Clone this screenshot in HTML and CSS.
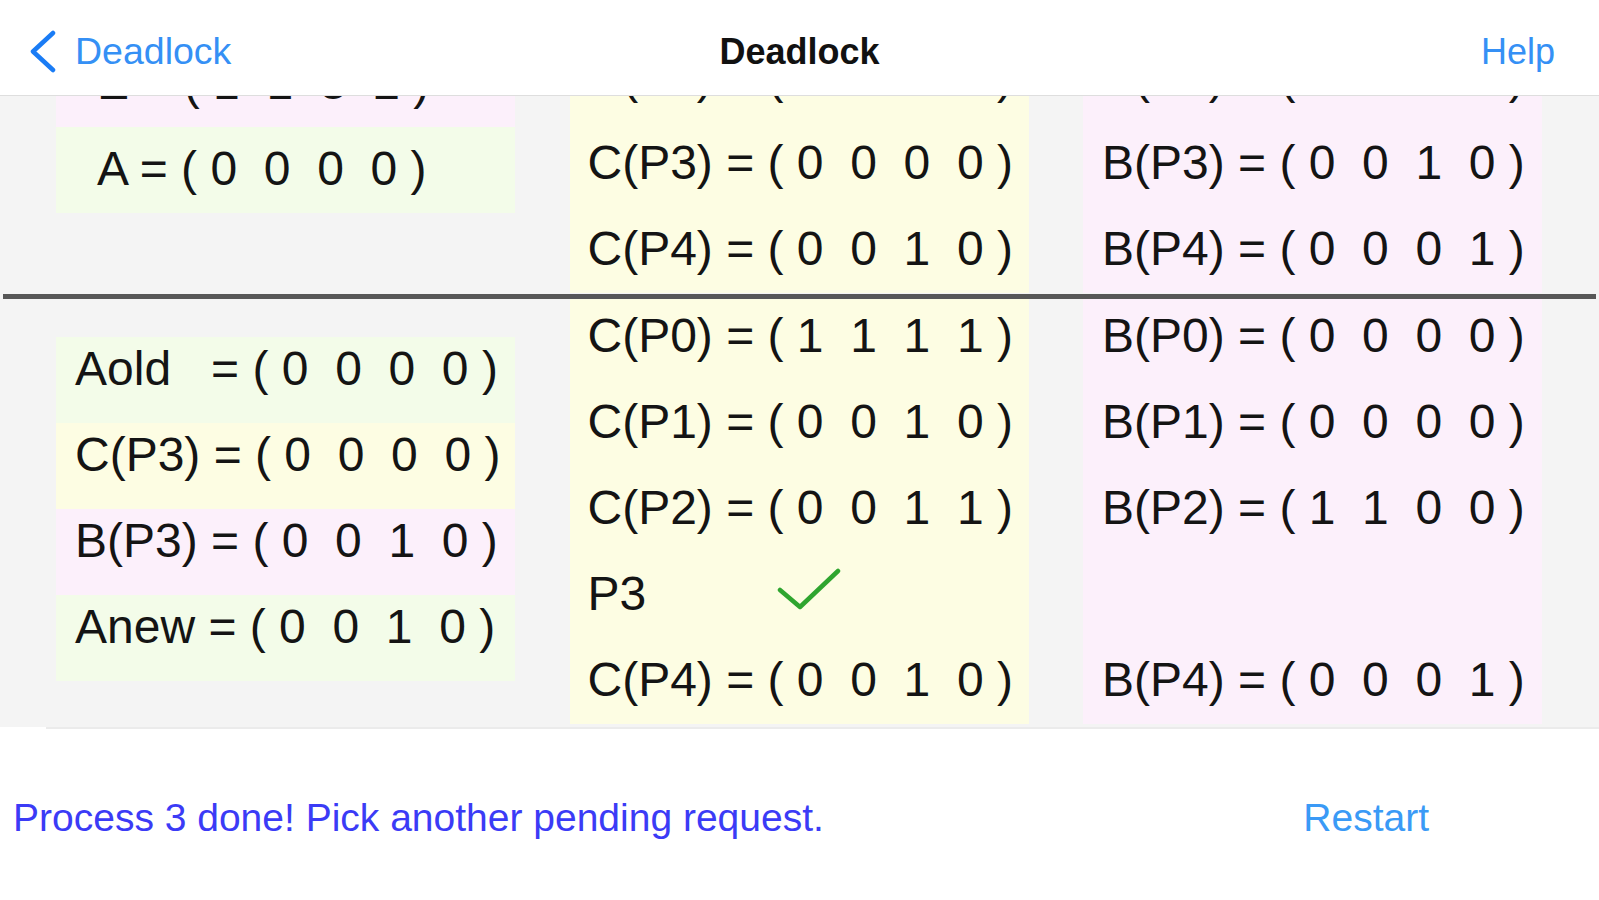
FILE: index.html
```html
<!DOCTYPE html>
<html lang="en">
<head>
<meta charset="utf-8">
<title>Deadlock</title>
<link rel="stylesheet" href="styles.css">
</head>
<body>
<header class="nav">
  <a class="back">
    <svg class="chev" width="30" height="44" viewBox="0 0 30 44"><path d="M25 3 L5 21.5 L25 40" fill="none" stroke="#1a7cf5" stroke-width="4.5" stroke-linecap="round" stroke-linejoin="round"/></svg>
    <span class="back-text">Deadlock</span>
  </a>
  <div class="title">Deadlock</div>
  <a class="help">Help</a>
</header>

<main class="scroll">
  <div class="content">
    <section class="grid top">
      <div class="col left-top">
        <div class="row p pad-l">E = ( 1  1  3  2 )</div>
        <div class="row g pad-l">A = ( 0  0  0  0 )</div>
      </div>
      <div class="col y">
        <div class="row">C(P2) = ( 0  0  1  1 )</div>
        <div class="row">C(P3) = ( 0  0  0  0 )</div>
        <div class="row">C(P4) = ( 0  0  1  0 )</div>
      </div>
      <div class="col p">
        <div class="row">B(P2) = ( 1  1  0  0 )</div>
        <div class="row">B(P3) = ( 0  0  1  0 )</div>
        <div class="row">B(P4) = ( 0  0  0  1 )</div>
      </div>
    </section>

    <div class="divider"></div>

    <section class="grid bottom">
      <div class="col left-bottom">
        <div class="row g lb">Aold   = ( 0  0  0  0 )</div>
        <div class="row y lb">C(P3) = ( 0  0  0  0 )</div>
        <div class="row p lb">B(P3) = ( 0  0  1  0 )</div>
        <div class="row g lb">Anew = ( 0  0  1  0 )</div>
      </div>
      <div class="col y">
        <div class="row">C(P0) = ( 1  1  1  1 )</div>
        <div class="row">C(P1) = ( 0  0  1  0 )</div>
        <div class="row">C(P2) = ( 0  0  1  1 )</div>
        <div class="row">P3<svg class="check" width="64" height="52" viewBox="0 0 64 52"><path d="M3 23 L23 40 L61 4" fill="none" stroke="#2fa52f" stroke-width="4.5" stroke-linecap="round" stroke-linejoin="round"/></svg></div>
        <div class="row">C(P4) = ( 0  0  1  0 )</div>
      </div>
      <div class="col p right">
        <div class="row">B(P0) = ( 0  0  0  0 )</div>
        <div class="row">B(P1) = ( 0  0  0  0 )</div>
        <div class="row">B(P2) = ( 1  1  0  0 )</div>
        <div class="row"></div>
        <div class="row">B(P4) = ( 0  0  0  1 )</div>
      </div>
    </section>
  </div>
</main>
<div class="sep"></div>

<footer class="footer">
  <div class="status">Process 3 done! Pick another pending request.</div>
  <a class="restart">Restart</a>
</footer>
</body>
</html>
```

FILE: styles.css
```css
html, body {
  margin: 0;
  padding: 0;
}

body {
  width: 1599px;
  height: 900px;
  overflow: hidden;
  background: #ffffff;
  font-family: "Liberation Sans", Arial, sans-serif;
  color: #111111;
}

.nav {
  height: 87px;
  border-bottom: 1px solid #dedede;
  background: #ffffff;
  display: grid;
  grid-template-columns: 1fr auto 1fr;
  align-items: center;
  padding: 8px 28px 0 28px;
  font-size: 36px;
}

.back {
  justify-self: start;
  display: flex;
  align-items: center;
  gap: 17px;
  color: #3590f5;
}

.back-text {
  font-size: 37.5px;
}

.chev {
  display: block;
}

.title {
  font-weight: bold;
  color: #111111;
}

.help {
  justify-self: end;
  margin-right: 16px;
  color: #3590f5;
}

.scroll {
  height: 631px;
  overflow: hidden;
  background: #f4f4f4;
}

.content {
  margin-top: -61px;
}

.grid {
  display: grid;
  grid-template-columns: 459px 459px 459px;
  column-gap: 54.5px;
  padding-left: 56px;
}

.top {
  align-items: start;
}

.bottom {
  align-items: center;
}

.left-top {
  padding-top: 6px;
}

.row {
  height: 86px;
  display: flex;
  align-items: center;
  font-size: 48px;
  white-space: pre;
  padding-left: 18px;
  padding-bottom: 4px;
  box-sizing: border-box;
  color: #141414;
}

.right .row,
.top .p .row {
  padding-left: 19px;
}

.pad-l {
  padding-left: 41px;
}

.lb {
  padding-left: 19px;
  padding-bottom: 24px;
}

.g {
  background: #f3fce9;
}

.y {
  background: #fdfde3;
}

.p {
  background: #fcf0fb;
}

.left-top .p {
  padding-left: 41px;
}

.divider {
  position: relative;
  height: 5px;
  margin: 1px 3px -5px 3px;
  background: #575757;
}

.check {
  display: block;
  margin-left: 131px;
}

.sep {
  height: 2px;
  margin-left: 46px;
  background: #ebebeb;
}

.footer {
  display: flex;
  align-items: flex-start;
  padding: 67px 0 0 13px;
  font-size: 39px;
}

.status {
  color: #3b3bf6;
}

.restart {
  margin-left: auto;
  margin-right: 170px;
  color: #3a9af6;
}
```
